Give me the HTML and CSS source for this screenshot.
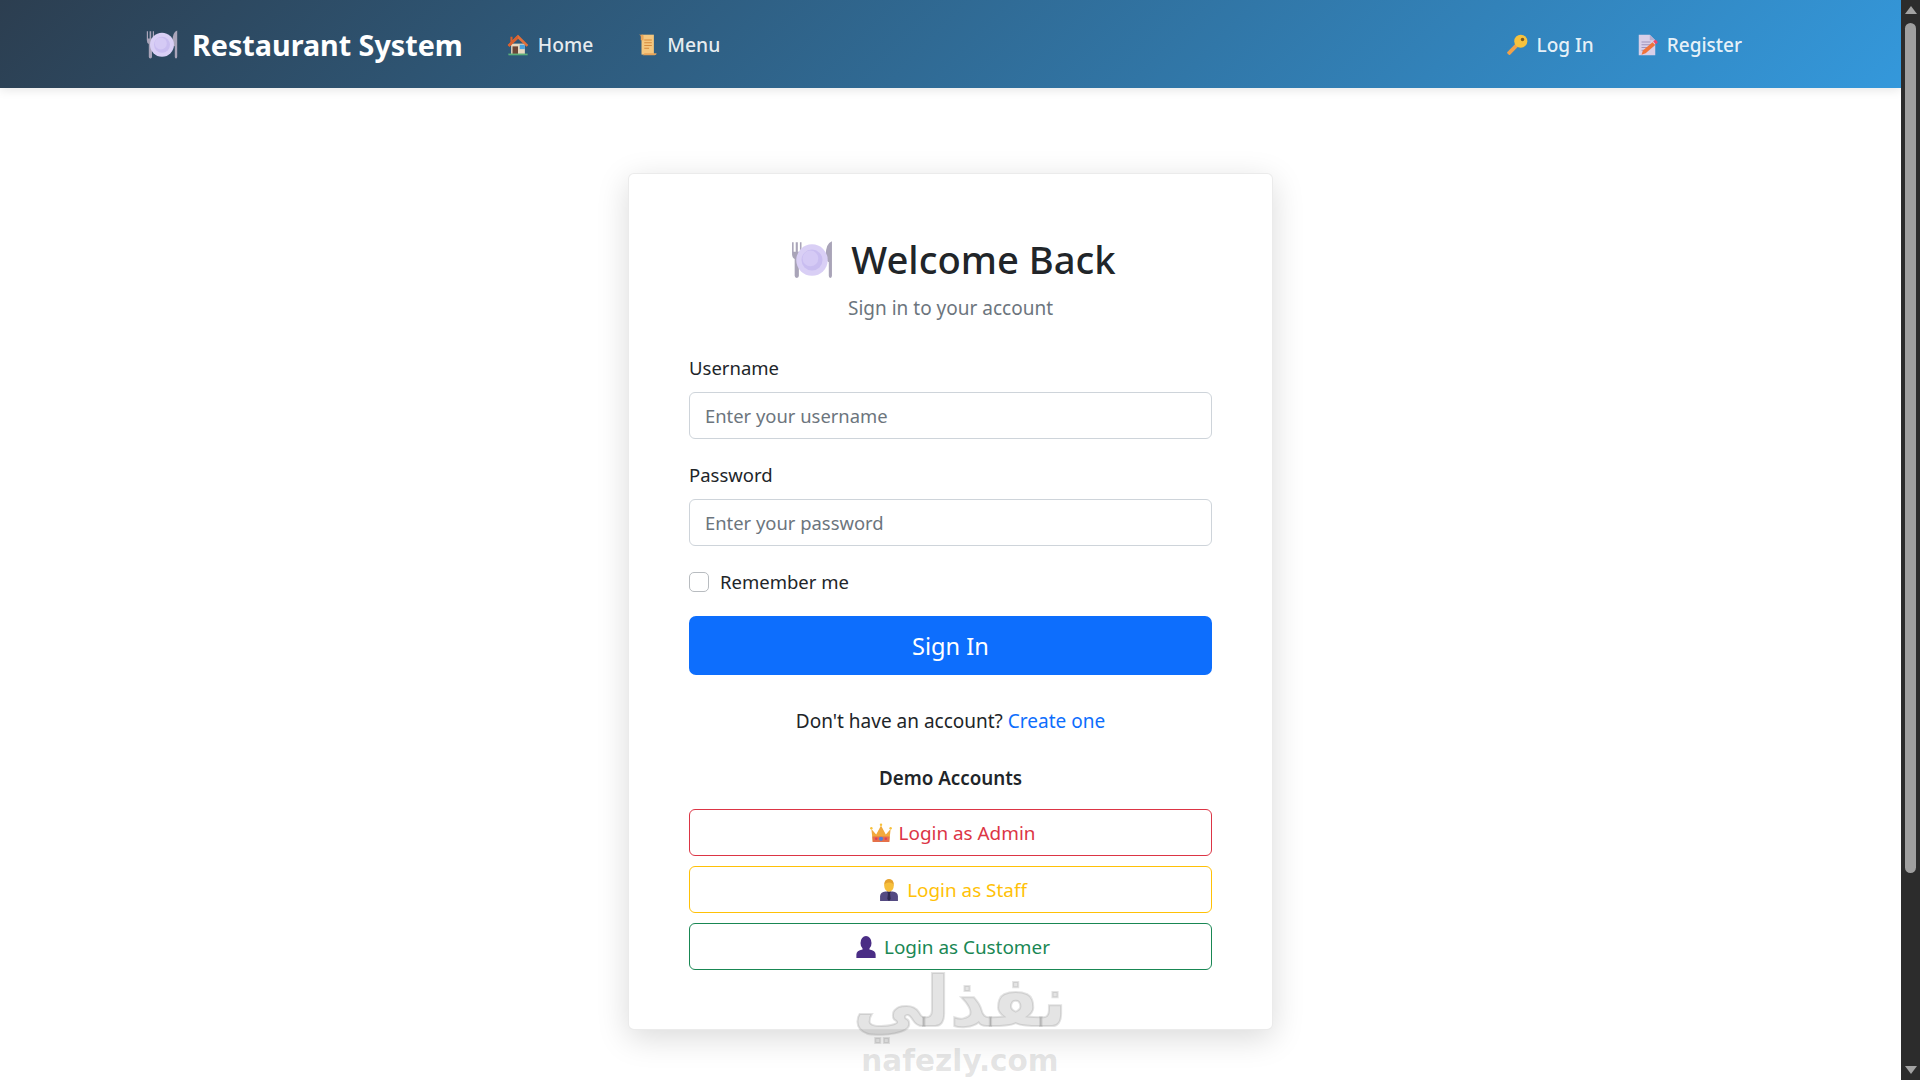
FILE: index.html
```html
<!DOCTYPE html>
<html lang="en">
<head>
  <meta charset="UTF-8">
  <meta name="viewport" content="width=device-width, initial-scale=1.0">
  <title>Login – Restaurant System</title>
  <link rel="stylesheet" href="styles.css">
</head>
<body>
  <svg class="defs" aria-hidden="true">
    <symbol id="ico-plate" viewBox="0 0 40 40">
      <path d="M1 4v11q0 4 2.500 5v16q0 2 2 2t2-2V20q2.500-1 2.500-5V4H8.500v9H6.500V4h-2v9H2.500V4z" fill="#a9a4b8"/>
      <path d="M39 3q-6 2-6 14 0 5 3 6v13q0 2 1.500 2t1.500-2z" fill="#a9a4b8"/>
      <circle cx="20" cy="21" r="15" fill="#d9cff5"/>
      <circle cx="20" cy="21" r="10" fill="#c9bdf0"/>
      <circle cx="18.500" cy="19.500" r="7.500" fill="#d5caf5"/>
    </symbol>
    <symbol id="ico-house" viewBox="0 0 32 32">
      <path d="M6 14h20v15H6z" fill="#e8d9c0"/>
      <path d="M16 1 1 16l2.500 2.500L16 7l12.500 11.500L31 16z" fill="#e2703a"/>
      <path d="M16 1 8 9V4H5v8L1 16l2.500 2.500L16 7z" fill="#d8602f"/>
      <path d="M8 18h8v11H8z" fill="#6b4636"/>
      <path d="M18.500 15.500H26V22h-7.500z" fill="#4aa3df"/>
      <path d="M2 28.500h28V31H2z" fill="#5cb07a"/>
    </symbol>
    <symbol id="ico-scroll" viewBox="0 0 32 32">
      <path d="M8 1h18v29H8z" fill="#f5c77e"/>
      <path d="M4 1h5q2 0 2 2v6H7V4q0-3-3-3z" fill="#e8a55a"/>
      <path d="M8 31h19q3 0 3-3H12q0 3-4 3z" fill="#e8a55a"/>
      <path d="M12 8h11v1.500H12zM12 12h11v1.500H12zM12 16h11v1.500H12zM12 20h7v1.500h-7z" fill="#d58a3c"/>
    </symbol>
    <symbol id="ico-key" viewBox="0 0 32 32">
      <path d="M2 26 17 11l4 4L6 30q-1 1-2 0l-2-2q-1-1 0-2z" fill="#f0a14a"/>
      <circle cx="21.500" cy="10.500" r="9.500" fill="#f7c23c"/>
      <circle cx="24" cy="8" r="2.500" fill="#7a5a20"/>
    </symbol>
    <symbol id="ico-memo" viewBox="0 0 32 32">
      <path d="M4 1h16l8 8v22H4z" fill="#d8cfe8"/>
      <path d="M20 1l8 8h-8z" fill="#b9aed0"/>
      <path d="M8 11h13v1.500H8zM8 15h15v1.500H8zM8 19h11v1.500H8zM8 23h7v1.500H8z" fill="#a094ba"/>
      <path d="M8 30l2-6 14-12 4 4-14 12z" fill="#f0733a"/>
      <path d="M25 11l2-2q1-1 2 0l2 2q1 1 0 2l-2 2z" fill="#f0476a"/>
    </symbol>
    <symbol id="ico-crown" viewBox="0 0 32 32">
      <path d="M2 10l7 8 7-13 7 13 7-8-2 19H4z" fill="#f2a93c"/>
      <path d="M3.500 21h25L28 29H4z" fill="#e5704a"/>
      <circle cx="16" cy="24.500" r="3" fill="#4d7fdc"/>
      <circle cx="9" cy="24.500" r="1.800" fill="#e23d5a"/>
      <circle cx="23" cy="24.500" r="1.800" fill="#e23d5a"/>
      <circle cx="2" cy="9" r="1.800" fill="#f7c23c"/>
      <circle cx="16" cy="4" r="1.800" fill="#f7c23c"/>
      <circle cx="30" cy="9" r="1.800" fill="#f7c23c"/>
    </symbol>
    <symbol id="ico-staff" viewBox="0 0 32 32">
      <path d="M3 32v-7q0-6 8-7h10q8 1 8 7v7z" fill="#544a82"/>
      <path d="M13 18h6l-1.500 3 1 8-2.500 3-2.500-3 1-8z" fill="#2f2950"/>
      <ellipse cx="16" cy="9.500" rx="7" ry="9" fill="#f6bf3c"/>
      <path d="M9 9q0-9 7-9t7 9q-2-4-7-4t-7 4z" fill="#e5a22f"/>
    </symbol>
    <symbol id="ico-bust" viewBox="0 0 32 32">
      <path d="M2 32v-5q0-6 9-7.500V17h10v2.500q9 1.500 9 7.500v5z" fill="#4a2d85"/>
      <ellipse cx="16" cy="10" rx="8" ry="10" fill="#4a2d85"/>
    </symbol>
  </svg>

  <div class="window">
    <div class="viewport">
      <nav class="navbar">
        <div class="nav-left">
          <a class="brand" href="#"><svg class="ico ico-brand"><use href="#ico-plate"/></svg>Restaurant System</a>
          <a class="nav-link" href="#"><svg class="ico"><use href="#ico-house"/></svg>Home</a>
          <a class="nav-link" href="#"><svg class="ico"><use href="#ico-scroll"/></svg>Menu</a>
        </div>
        <div class="nav-right">
          <a class="nav-link" href="#"><svg class="ico"><use href="#ico-key"/></svg>Log In</a>
          <a class="nav-link" href="#"><svg class="ico"><use href="#ico-memo"/></svg>Register</a>
        </div>
      </nav>

      <main class="content">
        <div class="card">
          <h1 class="title"><svg class="ico ico-title"><use href="#ico-plate"/></svg>Welcome Back</h1>
          <p class="subtitle">Sign in to your account</p>

          <form class="login-form">
            <label class="form-label" for="username">Username</label>
            <input class="form-control" id="username" type="text" placeholder="Enter your username">

            <label class="form-label label-gap" for="password">Password</label>
            <input class="form-control" id="password" type="password" placeholder="Enter your password">

            <label class="form-check">
              <input class="check-input" type="checkbox">
              <span>Remember me</span>
            </label>

            <button class="btn-primary" type="button">Sign In</button>
          </form>

          <p class="signup">Don't have an account? <a href="#">Create one</a></p>

          <h2 class="demo-title">Demo Accounts</h2>
          <div class="demo-list">
            <button class="btn-outline btn-admin" type="button"><svg class="ico"><use href="#ico-crown"/></svg>Login as Admin</button>
            <button class="btn-outline btn-staff" type="button"><svg class="ico"><use href="#ico-staff"/></svg>Login as Staff</button>
            <button class="btn-outline btn-customer" type="button"><svg class="ico"><use href="#ico-bust"/></svg>Login as Customer</button>
          </div>
        </div>
      </main>

      <!-- watermark sits on top of the page -->
      <div class="watermark">
        <div class="wm-arabic" lang="ar" dir="rtl">نفذلي</div>
        <div class="wm-latin">nafezly.com</div>
      </div>
    </div>

    <aside class="scrollbar">
      <span class="arrow arrow-up"></span>
      <div class="track"><div class="thumb"></div></div>
      <span class="arrow arrow-down"></span>
    </aside>
  </div>
</body>
</html>
```

FILE: styles.css
```css
/* Reset & full-screen */
html, body {
  margin: 0;
  padding: 0;
  height: 100%;
  overflow: hidden;
  background: #fff;
  color: #212529;
  font-family: "Noto Sans", "Open Sans", sans-serif;
  font-size: 19px;
}
a { text-decoration: none; }
.defs { display: none; }

/* Page + scrollbar side by side */
.window {
  display: flex;
  height: 100vh;
}
.viewport {
  position: relative;
  flex: 1;
  min-width: 0;
  overflow: hidden;
}

/* Top bar */
.navbar {
  height: 88px;
  box-sizing: border-box;
  padding: 0 159px 0 146px;
  display: flex;
  align-items: center;
  justify-content: space-between;
  background: linear-gradient(135deg, #2c3e50, #3498db);
  box-shadow: 0 2px 10px rgba(0,0,0,0.1);
  position: relative;
}
.nav-left, .nav-right {
  display: flex;
  align-items: center;
}
.nav-left { gap: 43px; }
.nav-right { gap: 42px; }
.brand {
  display: flex;
  align-items: center;
  margin-right: 1px;
  color: #fff;
  font-size: 28.7px;
  font-weight: 700;
}
.nav-link {
  display: flex;
  align-items: center;
  padding-top: 1px;
  color: rgba(255,255,255,0.9);
  font-size: 19.3px;
  font-weight: 500;
}
.nav-link .ico { margin-right: 9px; }
.nav-right .nav-link { font-size: 19px; }
.ico {
  width: 22px;
  height: 22px;
  margin-right: 7px;
  flex: none;
}
.brand .ico-brand {
  width: 32px;
  height: 32px;
  margin-right: 14px;
}

/* Login card */
.content {
  display: flex;
  justify-content: center;
  padding-top: 85px;
}
.card {
  width: 645px;
  height: 857px;
  box-sizing: border-box;
  padding: 60px 60px 0;
  background: #fff;
  border: 1px solid rgba(0,0,0,0.08);
  border-radius: 6px;
  box-shadow: 0 8px 32px rgba(0,0,0,0.15);
}
.title {
  margin: 0;
  padding-left: 6px;
  display: flex;
  align-items: center;
  justify-content: center;
  font-size: 38.2px;
  font-weight: 500;
  line-height: 50px;
}
.title .ico-title {
  width: 42px;
  height: 42px;
  margin-right: 18px;
}
.subtitle {
  margin: 10px 0 0;
  text-align: center;
  color: #6c757d;
  font-size: 19px;
  line-height: 28px;
}

/* Form */
.login-form {
  margin-top: 32px;
  display: flex;
  flex-direction: column;
}
.form-label {
  margin-bottom: 10px;
  font-size: 18.5px;
  line-height: 28px;
}
.label-gap { margin-top: 22px; }
.form-control {
  height: 47px;
  box-sizing: border-box;
  padding: 0 15px;
  border: 1px solid #ced4da;
  border-radius: 6px;
  font: inherit;
  font-size: 18.4px;
  color: #212529;
}
.form-control::placeholder { color: #6c757d; opacity: 1; }
.form-check {
  margin-top: 22px;
  display: flex;
  align-items: center;
  gap: 11px;
  font-size: 18.5px;
  line-height: 28px;
}
.check-input {
  appearance: none;
  margin: 0;
  width: 20px;
  height: 20px;
  border: 1px solid #b8bcc0;
  border-radius: 5px;
  background: #fff;
}
.btn-primary {
  margin-top: 20px;
  height: 59px;
  border: 0;
  border-radius: 7px;
  background: #0d6efd;
  color: #fff;
  font: inherit;
  font-size: 23.6px;
}
.signup {
  margin: 32px 0 0;
  text-align: center;
  line-height: 28px;
}
.signup a { color: #0d6efd; }
.demo-title {
  margin: 29px 0 0;
  text-align: center;
  font-size: 18.8px;
  font-weight: 600;
  line-height: 28px;
}

/* Demo buttons */
.demo-list {
  margin-top: 17px;
  display: flex;
  flex-direction: column;
  gap: 10px;
}
.btn-outline {
  height: 47px;
  padding: 0 0 0 4px;
  display: flex;
  align-items: center;
  justify-content: center;
  background: #fff;
  border: 1px solid;
  border-radius: 6px;
  font: inherit;
  font-size: 18.9px;
}
.btn-admin { color: #dc3545; border-color: #dc3545; }
.btn-staff { color: #ffc107; border-color: #ffc107; }
.btn-customer { color: #198754; border-color: #198754; }

/* Watermark */
.watermark {
  position: absolute;
  left: 840px;
  top: 960px;
  width: 240px;
  text-align: center;
  color: rgba(120,120,120,0.2);
  font-family: "DejaVu Sans", sans-serif;
  font-weight: 700;
  pointer-events: none;
}
.wm-arabic {
  font-size: 70px;
  line-height: 84px;
  -webkit-text-stroke: 2px rgba(120,120,120,0.2);
}
.wm-latin {
  font-size: 29.5px;
  line-height: 34px;
}

/* Dark scrollbar */
.scrollbar {
  width: 19px;
  display: flex;
  flex-direction: column;
  align-items: center;
  background: #2c2c2c;
}
.arrow {
  width: 0;
  height: 0;
  margin: 6px 0;
  border-left: 6px solid transparent;
  border-right: 6px solid transparent;
}
.arrow-up { border-bottom: 8px solid #a3a3a3; }
.arrow-down { border-top: 8px solid #a3a3a3; }
.track {
  flex: 1;
  width: 100%;
  display: flex;
  justify-content: center;
}
.thumb {
  width: 11px;
  height: 850px;
  margin-top: 3px;
  border-radius: 6px;
  background: #9f9f9f;
}
```
